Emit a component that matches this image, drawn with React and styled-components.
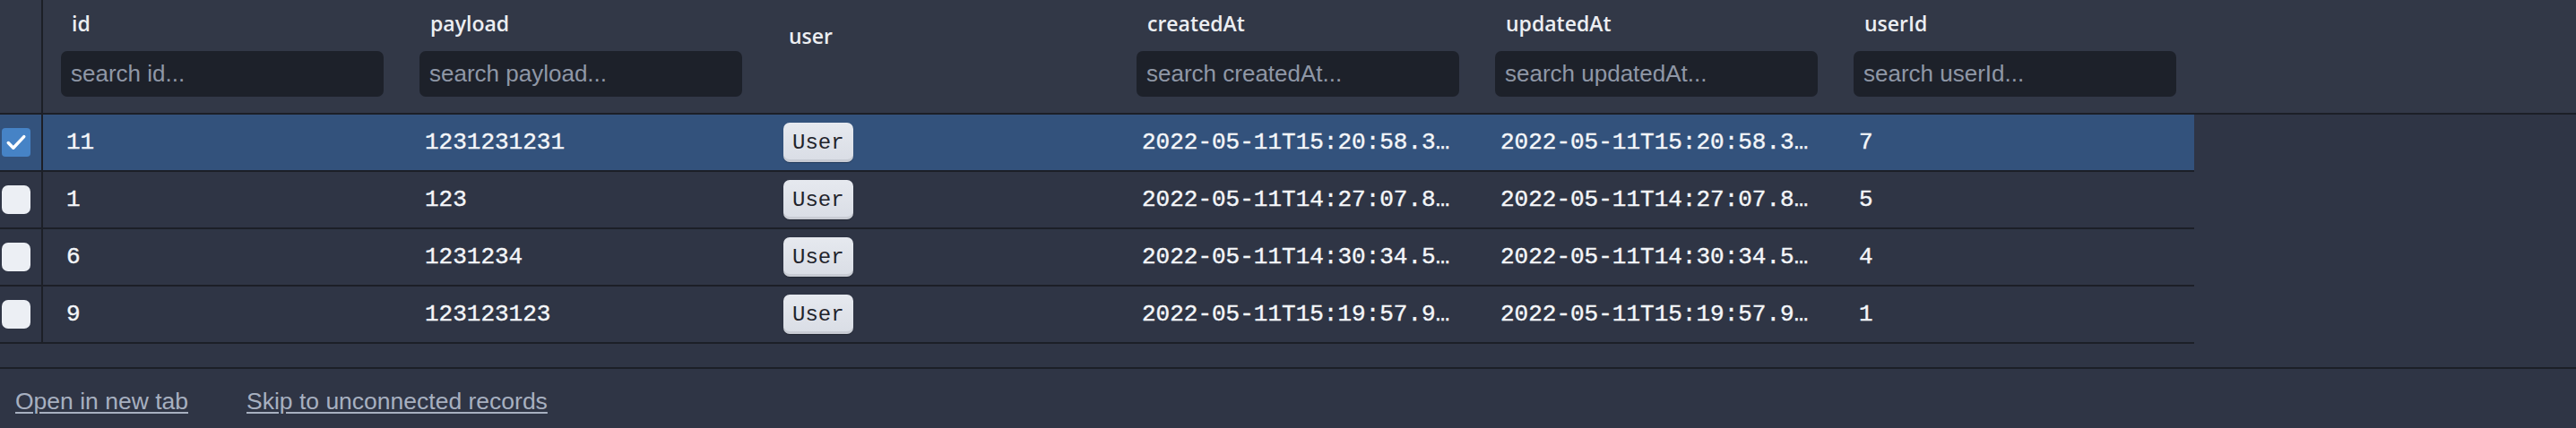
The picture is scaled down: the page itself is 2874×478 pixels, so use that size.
import styled, { createGlobalStyle } from "styled-components";

const GlobalStyle = createGlobalStyle`
  html, body {
    margin: 0;
    padding: 0;
    background-color: #2f3545;
  }
  * {
    box-sizing: border-box;
  }
`;

const Page = styled.div`
  width: 100%;
  min-height: 478px;
  background-color: #2f3545;
  font-family: "Liberation Sans", Arial, sans-serif;
`;

const Scroller = styled.div`
  padding-bottom: 26px;
  border-bottom: 2px solid #1c1f27;
`;

const HeaderRow = styled.div`
  display: flex;
  height: 128px;
  background-color: #323847;
  border-bottom: 2px solid #1c1f27;
`;

const SelectHead = styled.div`
  width: 48px;
  flex-shrink: 0;
  border-right: 2px solid #1c1f27;
`;

const HeaderCell = styled.div`
  width: 400px;
  flex-shrink: 0;
  display: flex;
  flex-direction: column;
  gap: 15px;
  padding: ${(p) => (p.$bare ? "24px" : "10px")} 20px 0 20px;
`;

const Label = styled.div`
  padding-left: 12px;
  height: 32px;
  line-height: 32px;
  font-family: "Open Sans", "Noto Sans", sans-serif;
  font-weight: 600;
  font-size: 23px;
  color: #eceef2;
`;

const Search = styled.input`
  width: 100%;
  height: 51px;
  border: none;
  border-radius: 7px;
  background-color: #1d212a;
  padding: 0 11px;
  font-family: "Liberation Sans", Arial, sans-serif;
  font-size: 26px;
  color: #e6e9ee;
  outline: none;

  &::placeholder {
    color: #8f97a6;
  }
`;

const Row = styled.div`
  display: flex;
  width: max-content;
  height: 64px;
  background-color: ${(p) => (p.$selected ? "#33527c" : "#2f3545")};
  border-bottom: 2px solid #1c1f27;
`;

const SelectCell = styled.div`
  width: 48px;
  flex-shrink: 0;
  display: flex;
  align-items: center;
  padding-left: 2px;
  border-right: 2px solid #1c1f27;
`;

const Check = styled.div`
  width: 32px;
  height: 32px;
  border-radius: ${(p) => (p.$checked ? "4px" : "7px")};
  background-color: ${(p) => (p.$checked ? "#4683c6" : "#eceff4")};
  display: flex;
  align-items: center;
  justify-content: center;
`;

const Cell = styled.div`
  width: 400px;
  flex-shrink: 0;
  display: flex;
  align-items: center;
  padding: 0 24px 0 26px;
  min-width: 0;
`;

const CellText = styled.span`
  display: block;
  overflow: hidden;
  white-space: nowrap;
  text-overflow: ellipsis;
  font-family: "Liberation Mono", "Courier New", monospace;
  font-size: 26px;
  color: #f4f6f9;
  -webkit-text-stroke: 0.4px #f4f6f9;
`;

const Badge = styled.span`
  display: inline-flex;
  align-items: center;
  height: 44px;
  padding: 0 10px;
  border-radius: 7px;
  background: linear-gradient(#e6e9ef, #d9dde5);
  box-shadow: inset 0 -3px 0 rgba(0, 0, 0, 0.08), 0 1px 1px rgba(0, 0, 0, 0.25);
  font-family: "Liberation Mono", "Courier New", monospace;
  font-size: 24px;
  color: #1f232b;
`;

const Footer = styled.div`
  display: flex;
  gap: 65px;
  padding: 21px 17px;
`;

const FooterLink = styled.a`
  font-family: "Liberation Sans", Arial, sans-serif;
  font-size: 26.5px;
  line-height: 30px;
  color: #a7b0c0;
  text-decoration: underline;
  text-underline-offset: 3px;
  cursor: pointer;
`;

const columns = ["id", "payload", "user", "createdAt", "updatedAt", "userId"];

const rows = [
  {
    id: "11",
    payload: "1231231231",
    createdAt: "2022-05-11T15:20:58.330Z",
    updatedAt: "2022-05-11T15:20:58.330Z",
    userId: "7",
    selected: true,
  },
  {
    id: "1",
    payload: "123",
    createdAt: "2022-05-11T14:27:07.812Z",
    updatedAt: "2022-05-11T14:27:07.812Z",
    userId: "5",
  },
  {
    id: "6",
    payload: "1231234",
    createdAt: "2022-05-11T14:30:34.512Z",
    updatedAt: "2022-05-11T14:30:34.512Z",
    userId: "4",
  },
  {
    id: "9",
    payload: "123123123",
    createdAt: "2022-05-11T15:19:57.921Z",
    updatedAt: "2022-05-11T15:19:57.921Z",
    userId: "1",
  },
];

const CheckMark = () => (
  <svg width="28" height="28" viewBox="0 0 24 24" fill="none">
    <path
      d="M4.5 12.5l4.8 4.8L19.5 6.5"
      stroke="#ffffff"
      strokeWidth="3"
      strokeLinecap="round"
      strokeLinejoin="round"
    />
  </svg>
);

const App = () => {
  return (
    <Page>
      <GlobalStyle />
      <Scroller>
        <HeaderRow>
          <SelectHead />
          {columns.map((c) =>
            c === "user" ? (
              <HeaderCell key={c} $bare>
                <Label>{c}</Label>
              </HeaderCell>
            ) : (
              <HeaderCell key={c}>
                <Label>{c}</Label>
                <Search placeholder={`search ${c}...`} />
              </HeaderCell>
            )
          )}
        </HeaderRow>
        {rows.map((r) => (
          <Row key={r.id} $selected={r.selected}>
            <SelectCell>
              <Check $checked={r.selected}>{r.selected && <CheckMark />}</Check>
            </SelectCell>
            <Cell>
              <CellText>{r.id}</CellText>
            </Cell>
            <Cell>
              <CellText>{r.payload}</CellText>
            </Cell>
            <Cell>
              <Badge>User</Badge>
            </Cell>
            <Cell>
              <CellText>{r.createdAt}</CellText>
            </Cell>
            <Cell>
              <CellText>{r.updatedAt}</CellText>
            </Cell>
            <Cell>
              <CellText>{r.userId}</CellText>
            </Cell>
          </Row>
        ))}
      </Scroller>
      <Footer>
        <FooterLink>Open in new tab</FooterLink>
        <FooterLink>Skip to unconnected records</FooterLink>
      </Footer>
    </Page>
  );
};

export default App;
